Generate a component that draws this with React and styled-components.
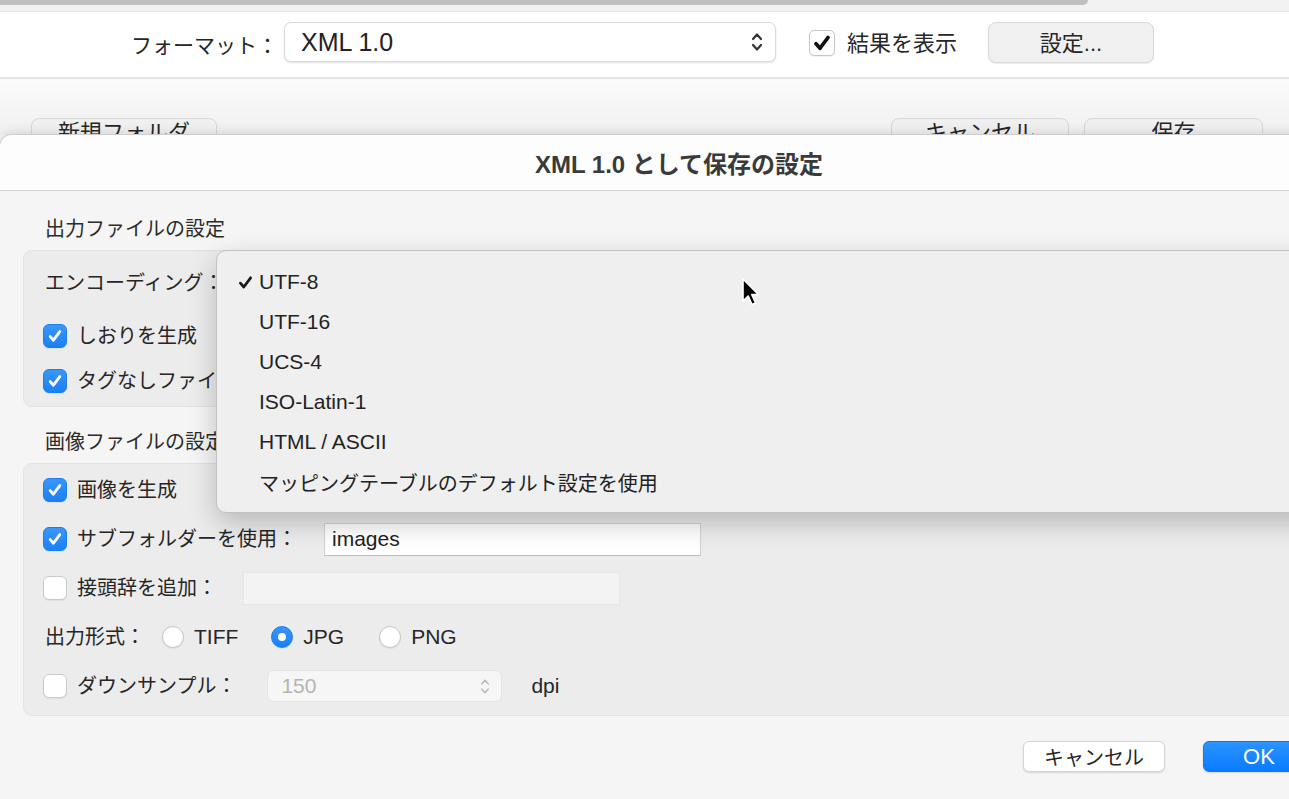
import styled, { createGlobalStyle } from 'styled-components'

const GlobalStyle = createGlobalStyle`
  * { box-sizing: border-box; }
  html, body { margin: 0; padding: 0; }
  body {
    width: 1289px;
    height: 799px;
    overflow: hidden;
    background: #f5f5f5;
    font-family: "Liberation Sans", "Noto Sans CJK JP", sans-serif;
    color: #262626;
  }
`

const Window = styled.div`
  width: 1289px;
  height: 799px;
  overflow: hidden;
  background: #f5f5f5;
`

const ScrollTrack = styled.div`
  height: 12px;
  background: #f2f2f2;
  border-bottom: 1px solid #e6e6e6;
`

const ScrollThumb = styled.div`
  width: 1088px;
  height: 5px;
  background: #bfbfbf;
  border-radius: 0 0 7px 0;
`

const Toolbar = styled.div`
  height: 67px;
  background: #fff;
  border-bottom: 2px solid #e3e3e3;
  display: flex;
  align-items: flex-start;
  padding: 10px 0 0 131px;
`

const FormatLabel = styled.div`
  font-size: 21px;
  line-height: 40px;
  margin-top: 4px;
  margin-right: 6px;
`

const PopupButton = styled.div`
  width: 492px;
  height: 40px;
  background: #fff;
  border: 1px solid #dadada;
  border-radius: 7px;
  box-shadow: 0 1px 2px rgba(0, 0, 0, 0.12);
  display: flex;
  align-items: center;
  justify-content: space-between;
  padding: 0 12px 0 16px;
  font-size: 25px;
  color: #222;
`

const TopCheck = styled.span`
  width: 26px;
  height: 26px;
  margin: 8px 0 0 33px;
  background: #fff;
  border: 1px solid #c6c6c6;
  border-radius: 5px;
  display: flex;
  align-items: center;
  justify-content: center;
  box-shadow: 0 1px 1px rgba(0, 0, 0, 0.06);
`

const ShowLabel = styled.div`
  font-size: 22px;
  line-height: 42px;
  margin-left: 12px;
  margin-top: 1px;
`

const PlainButton = styled.div`
  width: ${p => p.$w}px;
  height: ${p => p.$h || 41}px;
  margin-left: ${p => p.$ml || 0}px;
  background: #f0f0f0;
  border: 1px solid #d8d8d8;
  border-radius: 8px;
  box-shadow: 0 1px 1px rgba(0, 0, 0, 0.08);
  font-size: 22px;
  line-height: ${p => p.$clip ? '28px' : 'normal'};
  display: flex;
  justify-content: center;
  align-items: ${p => p.$clip ? 'flex-start' : 'center'};
  padding-bottom: ${p => p.$clip ? 0 : 3}px;
  flex: none;
`

const Band = styled.div`
  height: 56px;
  overflow: hidden;
  background: linear-gradient(#fbfbfb, #f0f0f0);
  display: flex;
  padding: 39px 26px 0 31px;
  gap: 15px;
`

const Spacer = styled.div`
  flex: 1;
`

const Dialog = styled.div`
  position: relative;
  z-index: 2;
  width: 1358px;
  border-radius: 12px 12px 0 0;
  background: #f5f5f5;
  box-shadow: 0 0 0 1px #cdcdcd, 0 -2px 12px rgba(0, 0, 0, 0.12);
`

const TitleBar = styled.div`
  height: 56px;
  background: #fdfdfd;
  border-radius: 12px 12px 0 0;
  border-bottom: 1px solid #d6d6d6;
  display: flex;
  align-items: center;
  justify-content: center;
  font-size: 24px;
  font-weight: bold;
  color: #3a3a3a;
`

const Body = styled.div`
  padding: 26px 23px 60px;
`

const SectionHeading = styled.div`
  font-size: 20px;
  line-height: 24px;
  padding-left: 22px;
  margin-top: ${p => p.$top || 0}px;
  margin-bottom: 9px;
  color: #2c2c2c;
`

const Group = styled.div`
  position: relative;
  background: #ececec;
  border: 1px solid #e2e2e2;
  border-radius: 9px;
  padding: ${p => p.$pad};
  display: flex;
  flex-direction: column;
  gap: ${p => p.$gap || 0}px;
`

const Row = styled.div`
  height: 34px;
  display: flex;
  align-items: center;
  padding-left: ${p => p.$indent || 19}px;
  margin-top: ${p => p.$top || 0}px;
`

const Label = styled.span`
  font-size: 20px;
  line-height: 24px;
  margin-left: ${p => p.$ml || 0}px;
  white-space: nowrap;
`

const Box = styled.span`
  width: 24px;
  height: 24px;
  border-radius: 6px;
  flex: none;
  display: flex;
  align-items: center;
  justify-content: center;
  background: ${p => p.$on ? 'linear-gradient(#3b96f9, #1a80f4)' : '#fff'};
  border: 1px solid ${p => p.$on ? '#1a7ef0' : '#c9c9c9'};
  box-shadow: 0 1px 1px rgba(0, 0, 0, 0.06);
`

const TextField = styled.div`
  width: 377px;
  height: 33px;
  margin-left: ${p => p.$ml}px;
  background: ${p => p.$off ? '#f3f3f3' : '#fff'};
  border: 1px solid ${p => p.$off ? '#e6e6e6' : '#d2d2d2'};
  border-bottom-color: ${p => p.$off ? '#e6e6e6' : '#bdbdbd'};
  font-size: 21px;
  padding-left: 7px;
  display: flex;
  align-items: center;
  color: #222;
`

const RadioOption = styled.div`
  display: flex;
  align-items: center;
  margin-left: ${p => p.$ml || 0}px;
  margin-right: ${p => p.$mr || 0}px;
  font-size: 21px;
`

const RadioDot = styled.span`
  width: 22px;
  height: 22px;
  border-radius: 50%;
  margin-right: 10px;
  flex: none;
  display: flex;
  align-items: center;
  justify-content: center;
  background: ${p => p.$on ? 'linear-gradient(#3b96f9, #1a80f4)' : '#fff'};
  border: 1px solid ${p => p.$on ? '#1a7ef0' : '#c6c6c6'};
  box-shadow: 0 1px 1px rgba(0, 0, 0, 0.06);

  &::after {
    content: '';
    display: ${p => p.$on ? 'block' : 'none'};
    width: 8px;
    height: 8px;
    border-radius: 50%;
    background: #fff;
  }
`

const StepperPopup = styled.div`
  width: 235px;
  height: 32px;
  margin-left: 31px;
  background: #f6f6f6;
  border: 1px solid #e4e4e4;
  border-radius: 7px;
  display: flex;
  align-items: center;
  justify-content: space-between;
  padding: 0 11px 0 13px;
  font-size: 21px;
  color: #b4b4b4;
`

const Unit = styled.span`
  font-size: 21px;
  margin-left: 29px;
`

const Footer = styled.div`
  display: flex;
  justify-content: flex-end;
  gap: 38px;
  padding: 25px 20px 0 0;
`

const FooterButton = styled.div`
  width: ${p => p.$w}px;
  height: 31px;
  border-radius: 6px;
  display: flex;
  align-items: center;
  justify-content: center;
  font-size: ${p => p.$primary ? 22 : 20}px;
  color: ${p => p.$primary ? '#fff' : '#262626'};
  background: ${p => p.$primary ? 'linear-gradient(#2a93ff, #0a7bff)' : '#fff'};
  border: 1px solid ${p => p.$primary ? '#0a78f5' : '#d4d4d4'};
  box-shadow: 0 1px 2px rgba(0, 0, 0, 0.12);
`

const Menu = styled.div`
  position: absolute;
  left: 192px;
  top: -1px;
  z-index: 5;
  width: 1150px;
  padding: 11px 0 10px;
  background: #efefef;
  border: 1px solid #c2c2c2;
  border-radius: 10px;
  box-shadow: 0 10px 28px rgba(0, 0, 0, 0.22);
`

const MenuItem = styled.div`
  height: 40px;
  display: flex;
  align-items: center;
  padding-left: 20px;
  font-size: ${p => p.$jp ? 20 : 21}px;
  color: #222;
`

const CheckSlot = styled.span`
  width: 22px;
  flex: none;
  display: flex;
  align-items: center;
`

const Cursor = styled.svg`
  position: absolute;
  left: 524px;
  top: 26px;
`

const Chevrons = ({ color = '#333', w = 12, h = 22, sw = 2.2 }) => (
  <svg width={w} height={h} viewBox="0 0 12 22" fill="none" stroke={color} strokeWidth={sw} strokeLinecap="round" strokeLinejoin="round">
    <path d="M2 8 L6 3.5 L10 8" />
    <path d="M2 14 L6 18.5 L10 14" />
  </svg>
)

const Tick = ({ color = '#fff', size = 16, sw = 2.8 }) => (
  <svg width={size} height={size} viewBox="0 0 16 16" fill="none" stroke={color} strokeWidth={sw} strokeLinecap="round" strokeLinejoin="round">
    <path d="M3.2 8.6 L6.4 12.2 L12.8 3.6" />
  </svg>
)

const Check = ({ on }) => (
  <Box $on={on}>{on && <Tick />}</Box>
)

const encodings = [
  { name: 'UTF-8', checked: true },
  { name: 'UTF-16' },
  { name: 'UCS-4' },
  { name: 'ISO-Latin-1' },
  { name: 'HTML / ASCII' },
  { name: 'マッピングテーブルのデフォルト設定を使用', jp: true },
]

const App = () => {
  return (
    <Window>
      <GlobalStyle />
      <ScrollTrack>
        <ScrollThumb />
      </ScrollTrack>

      <Toolbar>
        <FormatLabel>フォーマット：</FormatLabel>
        <PopupButton>
          <span>XML 1.0</span>
          <Chevrons />
        </PopupButton>
        <TopCheck>
          <Tick color="#111" size={20} sw={3} />
        </TopCheck>
        <ShowLabel>結果を表示</ShowLabel>
        <PlainButton $w={166} $ml={31}>設定...</PlainButton>
      </Toolbar>

      <Band>
        <PlainButton $w={186} $h={38} $clip>新規フォルダ</PlainButton>
        <Spacer />
        <PlainButton $w={178} $h={38} $clip>キャンセル</PlainButton>
        <PlainButton $w={179} $h={38} $clip>保存</PlainButton>
      </Band>

      <Dialog>
        <TitleBar>XML 1.0 として保存の設定</TitleBar>
        <Body>
          <SectionHeading>出力ファイルの設定</SectionHeading>
          <Group $pad="15px 0 8px">
            <Row $indent={21}>
              <Label>エンコーディング：</Label>
            </Row>
            <Row $top={19}>
              <Check on />
              <Label $ml={10}>しおりを生成</Label>
            </Row>
            <Row $top={11}>
              <Check on />
              <Label $ml={10}>タグなしファイルを生成</Label>
            </Row>

            <Menu>
              {encodings.map((item) => (
                <MenuItem key={item.name} $jp={item.jp}>
                  <CheckSlot>{item.checked && <Tick color="#1a1a1a" size={17} sw={2.6} />}</CheckSlot>
                  {item.name}
                </MenuItem>
              ))}
              <Cursor width="20" height="30" viewBox="0 0 20 30">
                <path d="M2 2 L2 24 L7.2 19 L11 27.5 L14.6 26 L10.8 17.6 L17.6 17.6 Z" fill="#000" stroke="#fff" strokeWidth="1.6" strokeLinejoin="round" />
              </Cursor>
            </Menu>
          </Group>

          <SectionHeading $top={23}>画像ファイルの設定</SectionHeading>
          <Group $pad="9px 0 12px" $gap={15}>
            <Row>
              <Check on />
              <Label $ml={10}>画像を生成</Label>
            </Row>
            <Row>
              <Check on />
              <Label $ml={10}>サブフォルダーを使用：</Label>
              <TextField $ml={27}>images</TextField>
            </Row>
            <Row>
              <Check />
              <Label $ml={10}>接頭辞を追加：</Label>
              <TextField $ml={26} $off />
            </Row>
            <Row $indent={21}>
              <Label>出力形式：</Label>
              <RadioOption $ml={17} $mr={33}>
                <RadioDot />TIFF
              </RadioOption>
              <RadioOption $mr={35}>
                <RadioDot $on />JPG
              </RadioOption>
              <RadioOption>
                <RadioDot />PNG
              </RadioOption>
            </Row>
            <Row>
              <Check />
              <Label $ml={10}>ダウンサンプル：</Label>
              <StepperPopup>
                <span>150</span>
                <Chevrons color="#b8b8b8" w={10} h={19} sw={1.8} />
              </StepperPopup>
              <Unit>dpi</Unit>
            </Row>
          </Group>

          <Footer>
            <FooterButton $w={142}>キャンセル</FooterButton>
            <FooterButton $w={112} $primary>OK</FooterButton>
          </Footer>
        </Body>
      </Dialog>
    </Window>
  )
}

export default App
